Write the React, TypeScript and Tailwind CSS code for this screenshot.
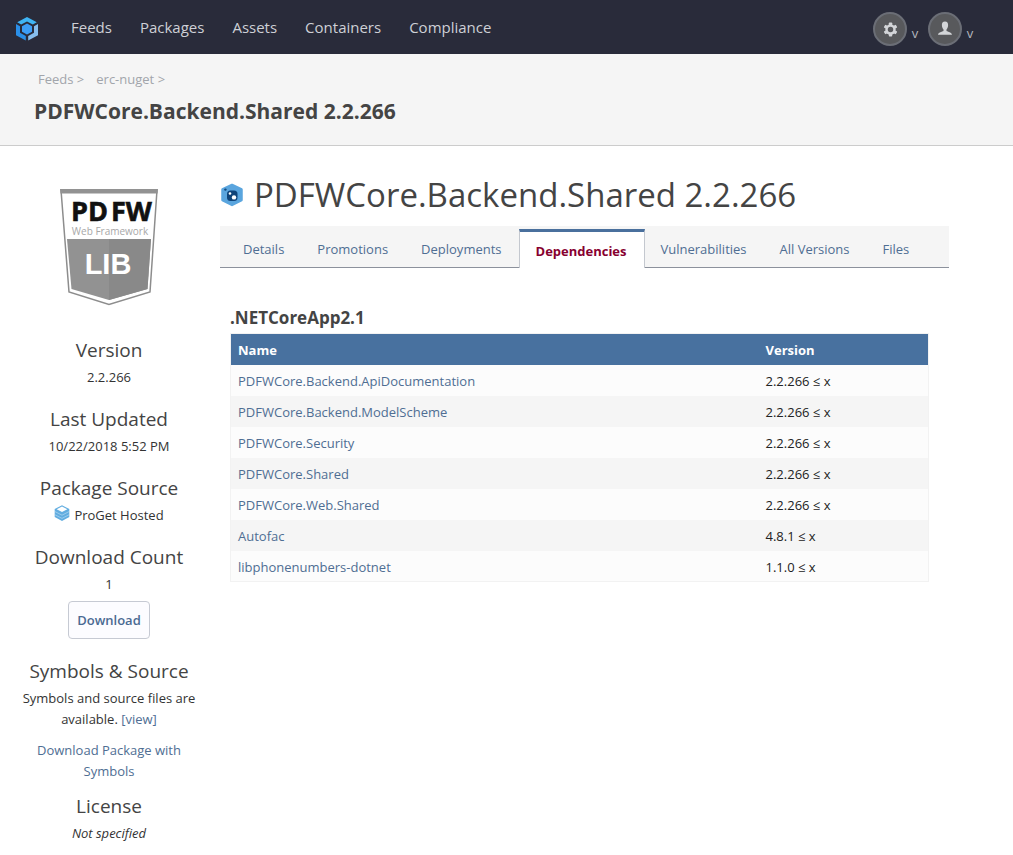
import type { ReactNode } from "react";

const navItems = ["Feeds", "Packages", "Assets", "Containers", "Compliance"];

const tabs = [
  "Details",
  "Promotions",
  "Deployments",
  "Dependencies",
  "Vulnerabilities",
  "All Versions",
  "Files",
];

const dependencies = [
  { name: "PDFWCore.Backend.ApiDocumentation", version: "2.2.266 ≤ x" },
  { name: "PDFWCore.Backend.ModelScheme", version: "2.2.266 ≤ x" },
  { name: "PDFWCore.Security", version: "2.2.266 ≤ x" },
  { name: "PDFWCore.Shared", version: "2.2.266 ≤ x" },
  { name: "PDFWCore.Web.Shared", version: "2.2.266 ≤ x" },
  { name: "Autofac", version: "4.8.1 ≤ x" },
  { name: "libphonenumbers-dotnet", version: "1.1.0 ≤ x" },
];

function Logo() {
  return (
    <svg viewBox="0 0 24 26" className="h-[26px] w-6" aria-hidden="true">
      <path d="M12 1 21.8 6.2 17.8 8.5 12 5.4 6.2 8.5 2.2 6.2Z" fill="#3fb4f4" />
      <path d="M1 8 5 10.2V16.8L10.8 20V24.6L1 19.2Z" fill="#2a8fe8" />
      <path d="M23 8 19 10.2V16.8L13.2 20V24.6L23 19.2Z" fill="#86bdee" />
      <path d="M12 7.4 17 10.2V15.8L12 18.6 7 15.8V10.2Z" fill="#3c9df6" />
    </svg>
  );
}

function GearIcon() {
  return (
    <svg viewBox="0 0 16 16" className="h-[15px] w-[15px]" aria-hidden="true">
      <g fill="#d3d5d8">
        <rect x="6.2" y="0.6" width="3.6" height="14.8" rx="0.8" />
        <rect x="6.2" y="0.6" width="3.6" height="14.8" rx="0.8" transform="rotate(60 8 8)" />
        <rect x="6.2" y="0.6" width="3.6" height="14.8" rx="0.8" transform="rotate(120 8 8)" />
        <circle cx="8" cy="8" r="5.5" />
      </g>
      <circle cx="8" cy="8" r="2.9" fill="#58595c" />
    </svg>
  );
}

function UserIcon() {
  return (
    <svg viewBox="0 0 16 16" className="h-4 w-4" aria-hidden="true">
      <path
        d="M8 0.600C5.700 0.600 4.800 2.200 4.900 4.300C5 6.300 5.700 7.700 6.500 8.500V9.900C5 10.800 1.200 11 1 13.800H15C14.800 11 11 10.800 9.500 9.900V8.500C10.300 7.700 11 6.300 11.100 4.300C11.200 2.200 10.300 0.600 8 0.600Z"
        fill="#d3d5d8"
      />
    </svg>
  );
}

function PackageIcon() {
  return (
    <svg viewBox="0 0 24 24" className="h-6 w-6 shrink-0" aria-hidden="true">
      <path
        d="M12 1.900 21.500 6.500V17.100L12 21.900 2.500 17.100V6.500Z"
        fill="#5aa5de"
        stroke="#5aa5de"
        strokeWidth="2.500"
        strokeLinejoin="round"
      />
      <circle cx="5.400" cy="6.600" r="1.200" fill="#134a80" />
      <rect x="7" y="7.500" width="10.500" height="10.500" rx="3.500" fill="#0f4479" />
      <circle cx="10" cy="10.500" r="1.300" fill="#ffffff" />
      <circle cx="14" cy="14.400" r="2.200" fill="#ffffff" />
    </svg>
  );
}

function HostedIcon() {
  return (
    <svg viewBox="0 0 16 16" className="h-4 w-4" aria-hidden="true">
      <path d="M8 0.300 15.300 4V12L8 15.900 0.700 12V4Z" fill="#62ade0" />
      <path d="M8 1.600 13.300 4.300 8 7.100 2.700 4.300Z" fill="#ffffff" />
      <path d="M1 6.600 8 10.200 15 6.600M1 9.800 8 13.400 15 9.800" fill="none" stroke="#a9d3ef" strokeWidth="0.800" />
    </svg>
  );
}

function PackageBadge() {
  return (
    <svg viewBox="0 0 98 117" className="h-[117px] w-[98px]" role="img" aria-label="PDFW Web Framework LIB">
      <path d="M1 1H97L90 103L49 115.500L9 103Z" fill="#ffffff" stroke="#8d8d8d" strokeWidth="1.500" />
      <path d="M0 0H98L97.500 4.500H0.500Z" fill="#929292" />
      <path d="M7 50H91L87.500 100L49 111L11.500 100Z" fill="#929292" />
      <path d="M49 50H91L87.500 100L49 111Z" fill="#898989" />
      <text x="11" y="32" fontFamily="Open Sans, sans-serif" fontSize="27" fontWeight="700" fill="#111111" stroke="#111111" strokeWidth="0.600">PD</text>
      <text x="51" y="32" fontFamily="Open Sans, sans-serif" fontSize="27" fontWeight="700" fill="#111111" stroke="#111111" strokeWidth="0.600">FW</text>
      <text x="50" y="46" textAnchor="middle" fontFamily="Open Sans, sans-serif" fontSize="10" fill="#a8a8a8">Web Framework</text>
      <text x="48" y="85" textAnchor="middle" fontFamily="Liberation Sans, sans-serif" fontSize="29" fontWeight="700" fill="#ffffff">LIB</text>
    </svg>
  );
}

function HeaderMenu({ label, children }: { label: string; children: ReactNode }) {
  return (
    <button type="button" aria-label={label} className="flex items-center gap-1">
      <span className="flex h-[34px] w-[34px] items-center justify-center rounded-full border-2 border-[#6b6e76] bg-[#58595c]">
        {children}
      </span>
      <span className="w-2 pt-2 text-[13px] leading-4 text-[#b4b7bf]">v</span>
    </button>
  );
}

function Fact({ title, compact = false, children }: { title: string; compact?: boolean; children: ReactNode }) {
  return (
    <section className={compact ? "mb-[7px]" : "mb-[14px]"}>
      <h2 className="text-[19px] leading-[34px] text-[#444444]">{title}</h2>
      <div className="leading-[21px]">{children}</div>
    </section>
  );
}

export default function App() {
  return (
    <div className="min-h-screen bg-white font-['Open_Sans',sans-serif] text-[13px] text-[#333333]">
      <header className="flex h-[54px] items-center justify-between bg-[#292b3a] pr-[39px] pl-[15px]">
        <div className="flex items-center gap-8">
          <a href="#home" aria-label="Home" className="pt-1">
            <Logo />
          </a>
          <nav className="flex gap-7 text-[15px] leading-6 text-[#ced0d6]">
            {navItems.map((item) => (
              <a key={item} href={`#${item.toLowerCase()}`}>
                {item}
              </a>
            ))}
          </nav>
        </div>
        <div className="flex gap-[9px] pt-1">
          <HeaderMenu label="Settings">
            <GearIcon />
          </HeaderMenu>
          <HeaderMenu label="Account">
            <UserIcon />
          </HeaderMenu>
        </div>
      </header>

      <div className="border-b border-[#cccccc] bg-[#f5f5f5] px-[34px] pt-[15px] pb-[18px]">
        <nav aria-label="Breadcrumb" className="flex gap-3 pl-1 leading-5 text-[#a2a5ab]">
          <span>
            <a href="#feeds">Feeds</a> &gt;
          </span>
          <span>
            <a href="#erc-nuget">erc-nuget</a> &gt;
          </span>
        </nav>
        <p className="pt-[6px] text-[21px] leading-8 font-bold text-[#444444]">PDFWCore.Backend.Shared 2.2.266</p>
      </div>

      <div className="flex">
        <aside className="w-[218px] shrink-0 px-5 pt-[43px] text-center">
          <div className="mb-[27px] flex justify-center">
            <PackageBadge />
          </div>
          <Fact title="Version">2.2.266</Fact>
          <Fact title="Last Updated">10/22/2018 5:52 PM</Fact>
          <Fact title="Package Source">
            <span className="flex justify-center gap-1">
              <HostedIcon />
              ProGet Hosted
            </span>
          </Fact>
          <Fact title="Download Count">
            1
            <div className="pt-[6px] pb-px">
              <button
                type="button"
                className="h-[38px] rounded border border-[#c6cad3] bg-[#fcfcff] px-2 font-semibold text-[#4a6a92]"
              >
                Download
              </button>
            </div>
          </Fact>
          <Fact title="Symbols & Source" compact>
            <p>
              Symbols and source files are available.{" "}
              <a href="#view" className="text-[#4f6e93]">
                [view]
              </a>
            </p>
            <p className="pt-[10px]">
              <a href="#symbols" className="text-[#4f6e93]">
                Download Package with Symbols
              </a>
            </p>
          </Fact>
          <Fact title="License" compact>
            <em>Not specified</em>
          </Fact>
        </aside>

        <main className="mr-16 ml-[2px] min-w-0 flex-1 pt-6">
          <div className="flex items-center gap-[10px]">
            <PackageIcon />
            <h1 className="text-[33px] leading-[50px] font-normal text-[#444444]">PDFWCore.Backend.Shared 2.2.266</h1>
          </div>

          <nav aria-label="Package sections" className="mt-[6px] flex h-[42px] bg-[#f5f5f5] text-[#4f6e93]">
            <span className="w-[7px] border-b border-[#8c919c]" />
            {tabs.map((tab) =>
              tab === "Dependencies" ? (
                <a
                  key={tab}
                  href="#dependencies"
                  aria-current="page"
                  className="mt-[3px] border-x border-t-[3px] border-x-[#c4c8cf] border-t-[#4a709d] bg-white pr-[17px] pl-4 leading-[38px] font-bold text-[#870030]"
                >
                  {tab}
                </a>
              ) : (
                <a key={tab} href={`#${tab.toLowerCase()}`} className="border-b border-[#8c919c] pr-[17px] pl-4 leading-[46px]">
                  {tab}
                </a>
              ),
            )}
            <span className="flex-1 border-b border-[#8c919c]" />
          </nav>

          <section className="pt-[35px] pr-5 pl-[10px]">
            <h2 className="text-[17px] leading-[30px] font-bold text-[#444444]">.NETCoreApp2.1</h2>
            <table className="w-full table-fixed border border-[#f2f2f2] text-left">
              <thead>
                <tr className="h-[31px] bg-[#48719f] text-white">
                  <th className="w-[528px] px-[7px] pt-[2px] font-bold">Name</th>
                  <th className="px-[7px] pt-[2px] font-bold">Version</th>
                </tr>
              </thead>
              <tbody>
                {dependencies.map((dep) => (
                  <tr key={dep.name} className="h-[31px] odd:bg-[#fcfcfc] even:bg-[#f5f5f5]">
                    <td className="px-[7px] pt-1">
                      <a href={`#${dep.name}`} className="text-[#4f6e93]">
                        {dep.name}
                      </a>
                    </td>
                    <td className="px-[7px] pt-1 text-[#222222]">{dep.version}</td>
                  </tr>
                ))}
              </tbody>
            </table>
          </section>
        </main>
      </div>
    </div>
  );
}
